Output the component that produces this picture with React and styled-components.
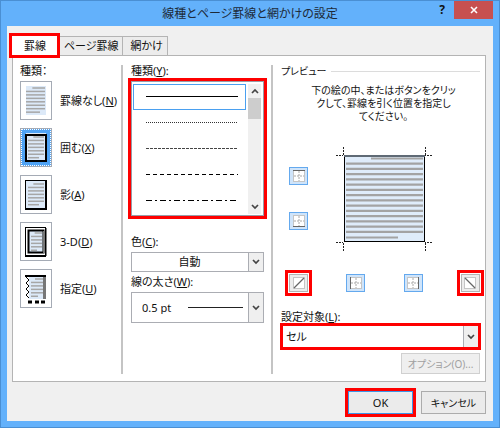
import React, { useState } from 'react';
import styled, { createGlobalStyle, css } from 'styled-components';

const kinds = [
    { id: 'none', label: '罫線なし', keyName: 'N' },
    { id: 'box', label: '囲む', keyName: 'X' },
    { id: 'shadow', label: '影', keyName: 'A' },
    { id: 'threeD', label: '3-D', keyName: 'D' },
    { id: 'custom', label: '指定', keyName: 'U' },
];

const lineStyles = [
    { id: 'solid', color: '#000000' },
    { id: 'dot', dash: '1 1', color: '#333333' },
    { id: 'short', dash: '3 1', color: '#444444' },
    { id: 'dash', dash: '4 3', color: '#000000' },
    { id: 'dashdot', dash: '6 3 2 3', color: '#000000' },
];

const tabs = ['罫線', 'ページ罫線', '網かけ'];

// text lines on the small page: left, right, first y and how many
const pageText = {
    none: [5, 24, 6, 8],
    box: [7, 23, 8, 7],
    shadow: [7, 23, 8, 7],
    threeD: [10, 21, 10, 6],
    custom: [10, 22, 9, 6],
};

function KindIcon({ kind }) {
    const [left, right, top, count] = pageText[kind];
    const rows = Array.from({ length: count }, (_, i) => top + i * 3.45);
    return (
        <svg width="30" height="37" viewBox="0 0 30 37">
            {kind !== 'custom' && <rect x="5" y="4" width="20" height="29" fill="#dce9f8" />}
            {kind === 'box' && <rect x="5" y="6" width="20" height="26" fill="#dce9f8" stroke="#000" strokeWidth="2" />}
            {kind === 'shadow' && (
                <>
                    <rect x="4.500" y="4.500" width="20" height="28" fill="#dce9f8" stroke="#000" />
                    <path d="M25 4v29H4" fill="none" stroke="#000" strokeWidth="2" />
                </>
            )}
            {kind === 'threeD' && (
                <>
                    <rect x="4.500" y="4.500" width="20" height="28" fill="#fff" stroke="#000" />
                    <path d="M4 33h21" stroke="#000" strokeWidth="2" />
                    <path d="M25 5v28" stroke="#000" />
                    <rect x="7.500" y="7.500" width="15" height="22" fill="#dce9f8" stroke="#000" strokeWidth="2" />
                    <path d="M23 8v22" stroke="#777" strokeWidth="2" />
                </>
            )}
            {kind === 'custom' && (
                <>
                    <rect x="8" y="7" width="14" height="22" fill="#dce9f8" />
                    <path d="M4 6h21" stroke="#000" strokeWidth="2" />
                    <path d="M23.500 7v22" stroke="#777" strokeWidth="3" />
                    <path d="M5 7l3 3-3 3 3 3-3 3 3 3-3 3 3 3" fill="none" stroke="#000" />
                    <path d="M7 32h4M14 32h4M20 32h4" stroke="#000" strokeWidth="3" />
                </>
            )}
            {rows.map((y, i) => (
                <path
                    key={y}
                    d={`M${i === 0 ? left + (right - left) / 3 : left} ${y}H${i === count - 1 ? right - 5 : right}`}
                    stroke="#a6a6a6"
                    strokeWidth="1.500"
                />
            ))}
        </svg>
    );
}

function EdgeIcon({ edge }) {
    const diagonal = edge === 'up' || edge === 'down';
    const solid = {
        top: 'M1 1.5h12',
        bottom: 'M1 12.5h12',
        left: 'M1.5 1v12',
        right: 'M12.5 1v12',
        up: 'M2 12L12 2',
        down: 'M2 2l10 10',
    };
    return (
        <svg width="14" height="14" viewBox="0 0 14 14">
            <rect x="1" y="1" width="12" height="12" fill="#fff" />
            <rect x="1.5" y="1.5" width="11" height="11" fill="none" stroke="#8a8a8a" strokeDasharray="1 1" />
            {!diagonal && <path d="M7 2v10M2 7h10" stroke="#a8a8a8" strokeDasharray="2 1" />}
            <path d={solid[edge]} stroke="#666" fill="none" strokeWidth={diagonal ? 1.2 : 1} />
        </svg>
    );
}

function Chevron({ up }) {
    return (
        <svg width="8" height="6" viewBox="0 0 8 6">
            <path d={up ? 'M1 5l3-3 3 3' : 'M1 1l3 3 3-3'} fill="none" stroke="#444" strokeWidth="1.700" />
        </svg>
    );
}

function PagePreview() {
    const rows = Array.from({ length: 14 }, (_, i) => 16.7 + i * 5.25);
    return (
        <svg width="97" height="104" viewBox="0 0 97 104" role="img" aria-label="プレビュー">
            <rect x="8.5" y="8.5" width="80" height="86" fill="#dfecfa" stroke="#000" />
            <path d="M8 9h81" stroke="#5f6a75" strokeWidth="2" />
            <path d="M35 11.500h52" stroke="#a3a3a3" strokeWidth="2" />
            {rows.map((y) => (
                <path key={y} d={`M10 ${y}h77`} stroke="#a3a3a3" strokeWidth="2.300" />
            ))}
            <path d="M10 90.500h52" stroke="#a3a3a3" strokeWidth="2" />
            <path
                d="M0 8.500h7M7.500 0v8M96 8.500h-7M89.500 0v8M0 95.500h7M7.500 96v8M96 95.500h-7M89.500 96v8"
                stroke="#222"
                strokeDasharray="2 1"
            />
        </svg>
    );
}

function Key({ name, end = '' }) {
    return <>(<u>{name}</u>){end}</>;
}

function EdgeToggle({ edge, label, ...rest }) {
    const [on, setOn] = useState(!rest.$marked);
    return (
        <EdgeButton type="button" aria-label={label} aria-pressed={on} $on={on} onClick={() => setOn(!on)} {...rest}>
            <EdgeIcon edge={edge} />
        </EdgeButton>
    );
}

function App() {
    const [kind, setKind] = useState('box');
    const [line, setLine] = useState('solid');

    return (
        <>
            <GlobalStyle />
            <Dialog role="dialog" aria-labelledby="dialog-title">
                <TitleBar>
                    <Title id="dialog-title">線種とページ罫線と網かけの設定</Title>
                    <WindowButtons>
                        <HelpButton type="button" aria-label="ヘルプ">?</HelpButton>
                        <CloseButton type="button" aria-label="閉じる">
                            <svg width="8" height="8" viewBox="0 0 8 8">
                                <path d="M1 1l6 6M7 1L1 7" stroke="#fff" strokeWidth="1.600" />
                            </svg>
                        </CloseButton>
                    </WindowButtons>
                </TitleBar>
                <Body>
                    <Tabs role="tablist">
                        {tabs.map((name, i) => (
                            <Tab key={name} type="button" role="tab" aria-selected={i === 0} $active={i === 0} $marked={i === 0}>
                                {name}
                            </Tab>
                        ))}
                    </Tabs>
                    <Panel role="tabpanel">
                        <KindColumn>
                            <Caption as="legend">種類：</Caption>
                            <KindList>
                                {kinds.map((k) => (
                                    <KindOption key={k.id}>
                                        <KindRadio
                                            type="radio"
                                            name="kind"
                                            checked={kind === k.id}
                                            onChange={() => setKind(k.id)}
                                        />
                                        <KindFrame $selected={kind === k.id}>
                                            <KindIcon kind={k.id} />
                                        </KindFrame>
                                        <span>{k.label}<Key name={k.keyName} /></span>
                                    </KindOption>
                                ))}
                            </KindList>
                        </KindColumn>

                        <Column>
                            <Caption as="div" id="style-label">種類<Key name="Y" end=":" /></Caption>
                            <StyleBox $marked>
                                <StyleList role="listbox" aria-labelledby="style-label">
                                    {lineStyles.map((s) => (
                                        <StyleItem
                                            key={s.id}
                                            type="button"
                                            role="option"
                                            aria-label={s.id}
                                            aria-selected={line === s.id}
                                            $selected={line === s.id}
                                            onClick={() => setLine(s.id)}
                                        >
                                            <svg width="92" height="2" viewBox="0 0 92 2" shapeRendering="crispEdges">
                                                <path
                                                    d="M0 .5h92"
                                                    stroke={s.color}
                                                    strokeDasharray={s.dash}
                                                />
                                            </svg>
                                        </StyleItem>
                                    ))}
                                </StyleList>
                                <ScrollBar>
                                    <Chevron up />
                                    <ScrollThumb />
                                    <Chevron />
                                </ScrollBar>
                            </StyleBox>

                            <ColorField>
                                <Caption htmlFor="color">色<Key name="C" end=":" /></Caption>
                                <SelectBox>
                                    <Select id="color" $centered>
                                        <option>自動</option>
                                    </Select>
                                    <SelectArrow><Chevron /></SelectArrow>
                                </SelectBox>
                            </ColorField>

                            <WidthField>
                                <Caption htmlFor="width">線の太さ<Key name="W" end=":" /></Caption>
                                <SelectBox>
                                    <Select id="width" $tall>
                                        <option>0.5 pt</option>
                                    </Select>
                                    <WidthSample />
                                    <SelectArrow><Chevron /></SelectArrow>
                                </SelectBox>
                            </WidthField>
                        </Column>

                        <Column>
                            <PreviewHeading>プレビュー</PreviewHeading>
                            <Hint>
                                下の絵の中、またはボタンをクリッ<br />
                                クして、罫線を引く位置を指定し<br />
                                てください。
                            </Hint>
                            <PreviewArea>
                                <SideEdges>
                                    <EdgeToggle edge="top" label="上罫線" />
                                    <EdgeToggle edge="bottom" label="下罫線" />
                                </SideEdges>
                                <PagePreview />
                            </PreviewArea>
                            <BottomEdges>
                                <EdgeToggle edge="up" label="右上がり斜線" $marked />
                                <EdgeToggle edge="left" label="左罫線" />
                                <EdgeToggle edge="right" label="右罫線" />
                                <EdgeToggle edge="down" label="右下がり斜線" $marked />
                            </BottomEdges>
                            <TargetCaption htmlFor="target">設定対象<Key name="L" end=":" /></TargetCaption>
                            <TargetBox $marked>
                                <Select id="target" $target>
                                    <option>セル</option>
                                </Select>
                                <SelectArrow><Chevron /></SelectArrow>
                            </TargetBox>
                            <OptionsButton type="button" disabled>オプション(O)...</OptionsButton>
                        </Column>
                    </Panel>
                    <Footer>
                        <PushButton type="button" $primary $marked>OK</PushButton>
                        <PushButton type="button">キャンセル</PushButton>
                    </Footer>
                </Body>
            </Dialog>
        </>
    );
}

const GlobalStyle = createGlobalStyle`
    *{
        box-sizing: border-box;
    }
    body{
        margin: 0;
        color: #111;
        font: 11px/12px "Noto Sans", "Noto Sans CJK JP", sans-serif;
        font-feature-settings: "palt";
    }
    button, select{
        margin: 0;
        padding: 0;
        color: inherit;
        font: inherit;
        font-feature-settings: inherit;
    }
    svg{
        display: block;
    }
`;

// red frame round the controls the guide talks about
const marked = css`
    outline: 3px solid #fe0000;
    border-radius: 0;
`;

const Dialog = styled.div`
    padding: 0 6px 6px;
    background: #63b1fb;
    border: 1px solid #4a8fd3;
`;

const TitleBar = styled.header`
    display: grid;
    grid-template-columns: 1fr auto 1fr;
    height: 25px;
`;

const Title = styled.h1`
    grid-column: 2;
    margin: 0;
    padding-top: 4px;
    font-size: 12px;
    font-weight: 400;
    line-height: 18px;
    color: #1d2a38;
`;

const WindowButtons = styled.div`
    display: flex;
    justify-content: flex-end;
    align-items: flex-start;
`;

const HelpButton = styled.button`
    width: 24px;
    height: 17px;
    border: 0;
    background: none;
    font-size: 12px;
    font-weight: 700;
`;

const CloseButton = styled.button`
    display: grid;
    place-items: center;
    width: 39px;
    height: 18px;
    border: 0;
    background: #c75050;
`;

const Body = styled.div`
    padding: 10px 7px 7px 5px;
    background: #f0f0f0;
`;

const Tabs = styled.div`
    display: flex;
    height: 19px;
`;

const Tab = styled.button`
    min-width: 45px;
    padding: 0 3px 0 7px;
    border: 1px solid #b4b4b4;
    border-width: 1px 1px 0 0;
    background: #ececec;

    ${({ $active }) => $active && css`
        position: relative;
        z-index: 1;
        padding: 0 10px 0 12px;
        background: #fff;
        border-color: #fff;
    `}
    ${({ $marked }) => $marked && marked}
`;

const Panel = styled.div`
    display: grid;
    grid-template-columns: 101px 150px 1fr;
    padding: 9px 5px 7px 7px;
    border: 1px solid #b4b4b4;
    background: #fff;
`;

const Column = styled.section`
    min-width: 0;
    padding: 0 7px 0 8px;
    border-left: 2px solid #c4c4c4;

    &:last-child{
        padding-right: 0;
    }
`;

const Caption = styled.label`
    display: block;
    height: 12px;
    margin-bottom: 4px;
    padding: 0;
    white-space: nowrap;
`;

const TargetCaption = styled(Caption)`
    margin-bottom: 1px;
`;

const KindColumn = styled.fieldset`
    min-width: 0;
    margin: 0;
    padding: 0;
    border: 0;
`;

const KindList = styled.div`
    display: flex;
    flex-direction: column;
    gap: 8px;
`;

const KindOption = styled.label`
    display: flex;
    align-items: center;
    gap: 8px;
    white-space: nowrap;
`;

const KindRadio = styled.input`
    position: absolute;
    opacity: 0;
`;

const KindFrame = styled.span`
    width: 32px;
    height: 39px;
    border: 1px solid #a5abb5;
    background: #fff;

    ${({ $selected }) => $selected && css`
        background: #4fa3f5;
        outline: 1px dotted #fff;
        outline-offset: -2px;
    `}
`;

const StyleBox = styled.div`
    display: flex;
    height: 135px;
    padding: 2px 2px 1px 1px;
    border: 1px solid #979da8;
    ${({ $marked }) => $marked && marked}
`;

const StyleList = styled.div`
    flex: 1;
`;

const StyleItem = styled.button`
    display: flex;
    align-items: center;
    width: 100%;
    height: 26px;
    padding-left: 12px;
    border: 1px solid ${({ $selected }) => ($selected ? '#4aa0f0' : 'transparent')};
    background: none;
`;

const ScrollBar = styled.div`
    display: flex;
    flex-direction: column;
    align-items: center;
    width: 13px;
    margin-left: 2px;
    padding: 4px 0;
    background: #f0f0f0;
`;

const ScrollThumb = styled.div`
    width: 100%;
    height: 21px;
    margin: 4px 0 auto;
    background: #cdcdcd;
`;

const ColorField = styled.div`
    margin-top: 20px;
`;

const WidthField = styled.div`
    margin-top: 4px;
`;

// select, sample and arrow share the one cell
const SelectBox = styled.div`
    display: grid;
    align-items: stretch;

    > *{
        grid-area: 1 / 1;
    }
`;

const TargetBox = styled(SelectBox)`
    ${({ $marked }) => $marked && marked}
    outline-offset: -2px;
`;

const Select = styled.select`
    appearance: none;
    width: 100%;
    height: 20px;
    padding: 0 16px 0 4px;
    border: 1px solid #abadb3;
    border-radius: 0;
    background: #fff;

    ${({ $centered }) => $centered && css`
        padding-left: 0;
        text-align: center;
        text-align-last: center;
    `}
    ${({ $tall }) => $tall && css`
        height: 31px;
        padding-left: 10px;
    `}
    ${({ $target }) => $target && css`
        height: 25px;
    `}
`;

const SelectArrow = styled.span`
    display: grid;
    place-items: center;
    justify-self: end;
    width: 16px;
    border: 1px solid #abadb3;
    background: #efefef;
    pointer-events: none;

    ${TargetBox} &{
        margin: 1px;
    }
`;

const WidthSample = styled.span`
    place-self: center end;
    width: 55px;
    height: 1px;
    margin-right: 21px;
    background: #222;
    pointer-events: none;
`;

const PreviewHeading = styled.h2`
    display: flex;
    align-items: center;
    gap: 5px;
    height: 12px;
    margin: 0 0 7px;
    font-size: 10px;
    font-weight: 400;

    &::after{
        content: '';
        flex: 1;
        height: 1px;
        background: #dcdcdc;
    }
`;

const Hint = styled.p`
    margin: 0 0 24px;
    padding-left: 6px;
    font-size: 10px;
    line-height: 13px;
    text-align: center;
    white-space: nowrap;
`;

const PreviewArea = styled.div`
    display: flex;
    gap: 28px;
    padding-left: 8px;
`;

const SideEdges = styled.div`
    display: flex;
    flex-direction: column;
    gap: 27px;
    padding-top: 20px;
`;

const BottomEdges = styled.div`
    display: flex;
    justify-content: space-between;
    margin: 23px 0 19px;
    padding-left: 8px;
`;

const EdgeButton = styled.button`
    display: grid;
    place-items: center;
    width: 19px;
    height: 18px;
    border: 1px solid ${({ $on }) => ($on ? '#64a9ee' : '#b4b4b4')};
    background: ${({ $on }) => ($on ? '#cfe4fa' : '#ececec')};
    ${({ $marked }) => $marked && css`
        ${marked}
        outline-offset: 1px;
    `}
`;

const PushButton = styled.button`
    width: 65px;
    height: 23px;
    border: 1px solid ${({ $primary }) => ($primary ? '#3c94e8' : '#acacac')};
    background: #ebebeb;
    font-size: ${({ $primary }) => ($primary ? '11px' : '10px')};
    ${({ $marked }) => $marked && marked}
`;

const OptionsButton = styled(PushButton)`
    display: block;
    width: 79px;
    height: 21px;
    margin: 4px 0 0 auto;
    border-color: #d0d0d0;
    background: #efefef;
    color: #a0a0a0;
    white-space: nowrap;
`;

const Footer = styled.footer`
    display: flex;
    justify-content: flex-end;
    gap: 8px;
    padding-top: 9px;
`;

export default App;
